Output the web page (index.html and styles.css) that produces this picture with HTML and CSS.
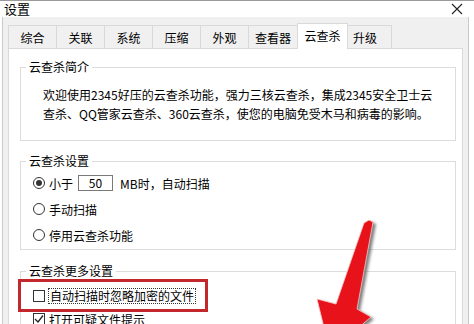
FILE: index.html
```html
<!DOCTYPE html>
<html lang="zh-CN">
  <head>
    <meta charset="UTF-8" />
    <title>设置</title>
    <link rel="stylesheet" href="styles.css">
  </head>
  <body>
    <div class="window">
      <div class="titlebar">
        <span class="title">设置</span>
        <svg class="close" width="12" height="12" viewBox="0 0 12 12">
          <path d="M1 1L11 11M11 1L1 11" stroke="#222" stroke-width="1.1" fill="none" />
        </svg>
      </div>

      <div class="client">
        <div class="tabs">
          <div class="tab">综合</div>
          <div class="tab">关联</div>
          <div class="tab">系统</div>
          <div class="tab">压缩</div>
          <div class="tab">外观</div>
          <div class="tab tab-wide">查看器</div>
          <div class="tab active">云查杀</div>
          <div class="tab tab-last">升级</div>
        </div>

        <div class="panel">
          <fieldset class="group group-intro">
            <legend>云查杀简介</legend>
            <div class="intro">
              欢迎使用2345好压的云查杀功能，强力三核云查杀，集成2345安全卫士云<br>
              查杀、QQ管家云查杀、360云查杀，使您的电脑免受木马和病毒的影响。
            </div>
          </fieldset>

          <fieldset class="group group-settings">
            <legend>云查杀设置</legend>
            <div class="option">
              <span class="radio checked"></span>
              <span>小于</span>
              <span class="size-box">50</span>
              <span class="after-box">MB时，自动扫描</span>
            </div>
            <div class="option">
              <span class="radio"></span>
              <span>手动扫描</span>
            </div>
            <div class="option">
              <span class="radio"></span>
              <span>停用云查杀功能</span>
            </div>
          </fieldset>

          <fieldset class="group group-more">
            <legend>云查杀更多设置</legend>
            <div class="check-row highlighted">
              <span class="checkbox"></span>
              <span class="focus-text">自动扫描时忽略加密的文件</span>
            </div>
            <div class="check-row">
              <span class="checkbox">
                <svg width="10" height="10" viewBox="0 0 10 10">
                  <path d="M1 5L4 8L9 1.5" stroke="#222" stroke-width="1.3" fill="none" />
                </svg>
              </span>
              <span>打开可疑文件提示</span>
            </div>
          </fieldset>
        </div>
      </div>
    </div>

    <!-- annotation arrow drawn over the dialog -->
    <svg class="arrow" width="474" height="324" viewBox="0 0 474 324">
      <defs>
        <filter id="soft" x="-20%" y="-20%" width="140%" height="140%">
          <feGaussianBlur stdDeviation="1.6" />
        </filter>
      </defs>
      <polygon transform="translate(3 2)" filter="url(#soft)" fill="#4a4a4a" opacity="0.7"
        points="369,220 373,222 357,309 371,317 330,352 317,299 336,304 364,223" />
      <polygon fill="#e8121a" stroke="#f6c9c9" stroke-width="0.8"
        points="369,220 373,222 357,309 371,317 330,352 317,299 336,304 364,223" />
    </svg>
  </body>
</html>
```

FILE: styles.css
```css
body {
  margin: 0;
  background: #fff;
  font-family: "Noto Sans CJK SC", "Liberation Sans", sans-serif;
  font-size: 12px;
  color: #000;
  overflow: hidden;
}
.window {
  height: 324px;
  display: flex;
  flex-direction: column;
}
.titlebar {
  height: 27px;
  display: flex;
  align-items: center;
  justify-content: space-between;
  padding: 0 11px 0 4px;
  background: #fff;
  border-top: 1px solid #9a9a9a;
  box-sizing: border-box;
}
.title {
  font-size: 13px;
  line-height: 16px;
}
.client {
  flex: 1;
  background: #f0f0f0;
  margin: 0 5px 0 2px;
  border-left: 1px solid #c9c9c9;
  border-right: 1px solid #c9c9c9;
  padding: 6px 5px 0 5px;
  display: flex;
  flex-direction: column;
}
.tabs {
  display: flex;
  align-items: flex-end;
}
.tab {
  width: 49px;
  height: 23px;
  box-sizing: border-box;
  border: 1px solid #d9d9d9;
  border-bottom: none;
  margin-right: -1px;
  padding-top: 4px;
  line-height: 16px;
  text-align: center;
  background: #f0f0f0;
}
.tab-wide {
  width: 50px;
}
.tab.active {
  width: 51px;
  height: 26px;
  margin-bottom: -1px;
  padding-top: 4px;
  background: #fff;
  position: relative;
  z-index: 1;
}
.tab-last {
  width: 45px;
  text-align: left;
  padding-left: 5px;
}
.panel {
  flex: 1;
  background: #fff;
  border: 1px solid #d9d9d9;
  border-bottom: none;
  padding: 10px 6px 0 11px;
}
.group {
  margin: 0;
  min-width: 0;
  border: 1px solid #dcdcdc;
  padding: 0 5px;
}
.group legend {
  padding: 0 3px;
  line-height: 16px;
}
.group-intro {
  padding-top: 10px;
  padding-bottom: 17px;
}
.intro {
  padding-left: 17px;
  line-height: 19px;
  white-space: nowrap;
}
.group-settings {
  margin-top: 12px;
  padding-top: 1px;
  padding-bottom: 1px;
}
.option {
  height: 26px;
  display: flex;
  align-items: center;
  padding-left: 7px;
}
.radio {
  width: 12px;
  height: 12px;
  box-sizing: border-box;
  border: 1px solid #333;
  border-radius: 50%;
  margin-right: 4px;
  display: flex;
  align-items: center;
  justify-content: center;
}
.radio.checked::after {
  content: "";
  width: 6px;
  height: 6px;
  border-radius: 50%;
  background: #333;
}
.size-box {
  width: 35px;
  height: 16px;
  box-sizing: border-box;
  border: 1px solid #7a7a7a;
  margin-left: 5px;
  text-align: center;
  line-height: 14px;
}
.after-box {
  margin-left: 7px;
}
.group-more {
  margin-top: 13px;
  padding-top: 1px;
}
.check-row {
  height: 20px;
  display: flex;
  align-items: center;
  padding-left: 7px;
}
.checkbox {
  width: 12px;
  height: 12px;
  box-sizing: border-box;
  border: 1px solid #333;
  margin-right: 4px;
  display: flex;
  align-items: center;
  justify-content: center;
}
.check-row.highlighted {
  height: 27px;
  width: 184px;
  box-sizing: border-box;
  margin: 2px 0 0 -5px;
  padding-left: 12px;
  outline: 3px solid #c3272b;
}
.focus-text {
  border: 1px dotted #333;
  padding: 0 1px;
  margin-left: -1px;
  line-height: 14px;
}
.arrow {
  position: absolute;
  left: 0;
  top: 0;
  pointer-events: none;
}
```
